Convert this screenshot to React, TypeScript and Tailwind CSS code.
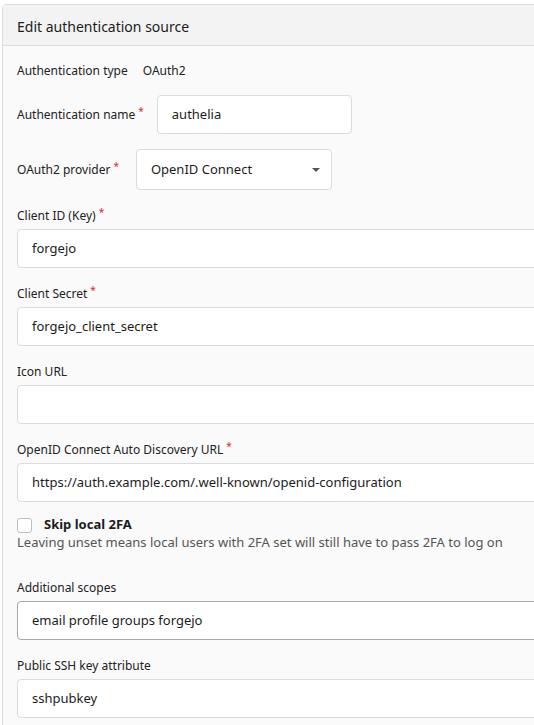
const Req = () => <span className="ml-[3px] self-start text-[10px] leading-none text-[#db2828]">*</span>;

const Label = ({ text, req }: { text: string; req?: boolean }) => (
  <div className="flex h-[18px] items-center text-[12px] text-[#222]">
    <span>{text}</span>
    {req && <Req />}
  </div>
);

const Input = ({ value, dark }: { value: string; dark?: boolean }) => (
  <div
    className={`flex h-[39px] items-center rounded-[4px] border bg-white px-[14px] text-[13px] text-[#1c1c1c] ${
      dark ? "border-[#a8a8a8]" : "border-[#dcdcdc]"
    }`}
  >
    {value}
  </div>
);

const Field = ({ label, value, req, dark, className = "" }: { label: string; value: string; req?: boolean; dark?: boolean; className?: string }) => (
  <div className={`flex flex-col gap-[4px] ${className}`}>
    <Label text={label} req={req} />
    <Input value={value} dark={dark} />
  </div>
);

export default function App() {
  return (
    <div className="h-[725px] w-[534px] overflow-hidden bg-white font-['Noto_Sans',sans-serif]">
      <div className="ml-[2px] mt-[4px] w-[560px] rounded-t-[4px] border border-[#dcdcdc]">
        <div className="flex h-[41px] items-center border-b border-[#dcdcdc] bg-[#f3f3f3] px-[14px] pt-[3px] text-[14px] text-[#1c1c1c]">
          Edit authentication source
        </div>
        <div className="h-[700px] bg-[#fafafa] px-[14px] pt-[16px]">
          <div className="flex h-[18px] items-center text-[12px] text-[#222]">
            <span>Authentication type</span>
            <span className="ml-[15px]">OAuth2</span>
          </div>

          <div className="mt-[15px] flex items-center">
            <div className="flex h-[18px] items-center text-[12px] text-[#222]">
              <span>Authentication name</span>
              <Req />
            </div>
            <div className="ml-[13px] flex h-[39px] w-[195px] items-center rounded-[4px] border border-[#dcdcdc] bg-white px-[14px] text-[13px] text-[#1c1c1c]">
              authelia
            </div>
          </div>

          <div className="mt-[15px] flex items-center">
            <div className="flex h-[18px] items-center text-[12px] text-[#222]">
              <span>OAuth2 provider</span>
              <Req />
            </div>
            <div className="ml-[17px] flex h-[41px] w-[196px] items-center justify-between rounded-[4px] border border-[#dcdcdc] bg-white pl-[14px] pr-[11px] text-[13px] text-[#1c1c1c]">
              <span>OpenID Connect</span>
              <svg width="8" height="4" viewBox="0 0 8 4">
                <path d="M0 0h8L4 4z" fill="#555" />
              </svg>
            </div>
          </div>

          <Field className="mt-[17px]" label="Client ID (Key)" value="forgejo" req />
          <Field className="mt-[17px]" label="Client Secret" value="forgejo_client_secret" req />
          <Field className="mt-[17px]" label="Icon URL" value="" />
          <Field className="mt-[17px]" label="OpenID Connect Auto Discovery URL" value="https://auth.example.com/.well-known/openid-configuration" req />

          <div className="mt-[14px] flex h-[18px] items-center">
            <div className="h-[15px] w-[15px] rounded-[3px] border border-[#bdbdbd] bg-white" />
            <span className="ml-[12px] text-[13px] font-bold text-[#1c1c1c]">Skip local 2FA</span>
          </div>
          <div className="text-[13px] leading-[17px] text-[#555]">
            Leaving unset means local users with 2FA set will still have to pass 2FA to log on
          </div>

          <Field className="mt-[28px]" label="Additional scopes" value="email profile groups forgejo" dark />
          <Field className="mt-[17px]" label="Public SSH key attribute" value="sshpubkey" />
        </div>
      </div>
    </div>
  );
}
